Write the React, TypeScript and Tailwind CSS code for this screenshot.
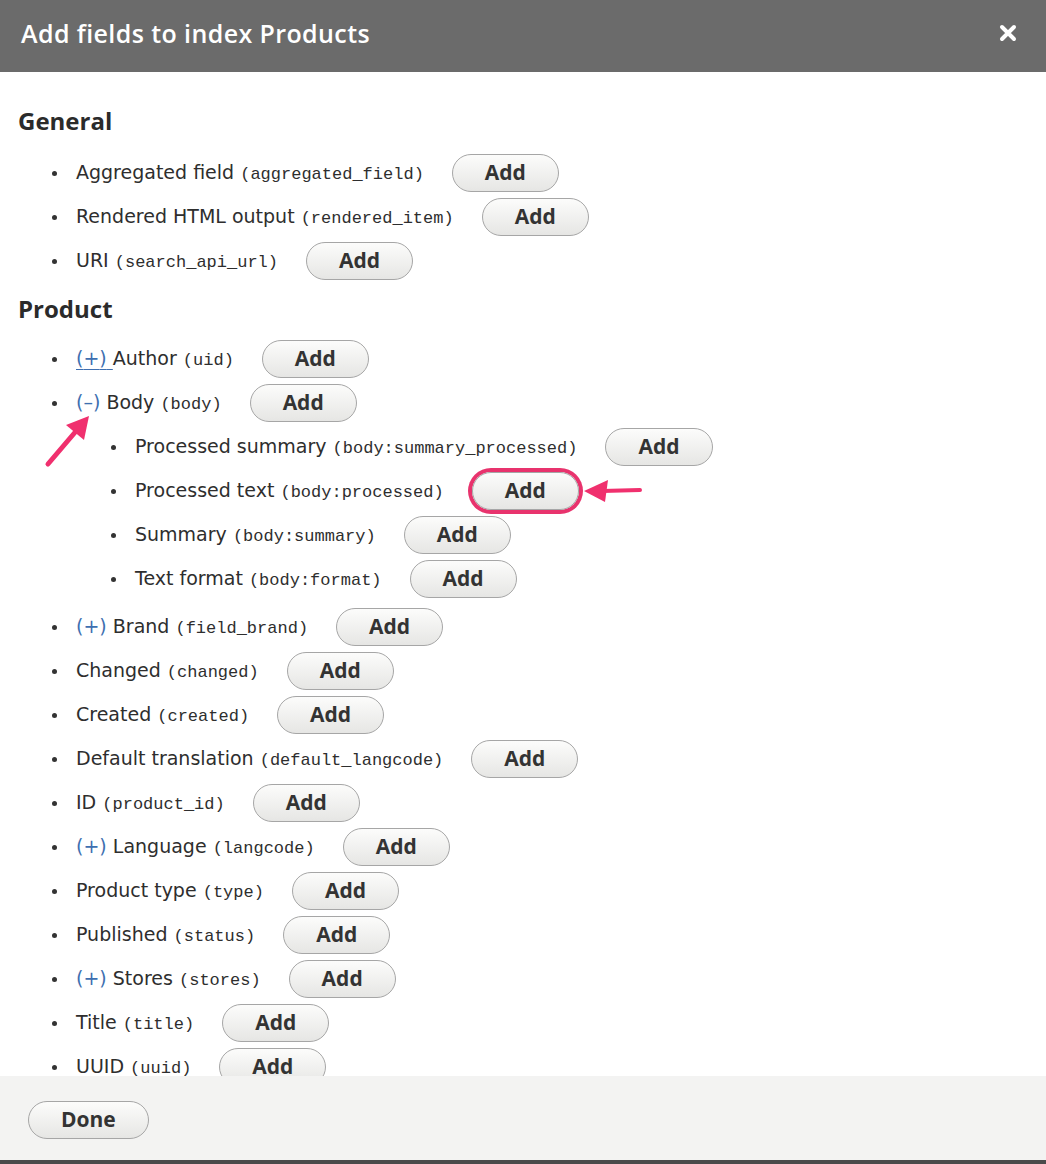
import { ReactNode } from "react";

type Field = {
  label: string;
  name: string;
  toggle?: "+" | "-";
  underline?: boolean;
  highlight?: boolean;
  children?: Field[];
};

const general: Field[] = [
  { label: "Aggregated field", name: "aggregated_field" },
  { label: "Rendered HTML output", name: "rendered_item" },
  { label: "URI", name: "search_api_url" },
];

const product: Field[] = [
  { label: "Author", name: "uid", toggle: "+", underline: true },
  {
    label: "Body",
    name: "body",
    toggle: "-",
    children: [
      { label: "Processed summary", name: "body:summary_processed" },
      { label: "Processed text", name: "body:processed", highlight: true },
      { label: "Summary", name: "body:summary" },
      { label: "Text format", name: "body:format" },
    ],
  },
  { label: "Brand", name: "field_brand", toggle: "+" },
  { label: "Changed", name: "changed" },
  { label: "Created", name: "created" },
  { label: "Default translation", name: "default_langcode" },
  { label: "ID", name: "product_id" },
  { label: "Language", name: "langcode", toggle: "+" },
  { label: "Product type", name: "type" },
  { label: "Published", name: "status" },
  { label: "Stores", name: "stores", toggle: "+" },
  { label: "Title", name: "title" },
  { label: "UUID", name: "uuid" },
];

function Button({ children, highlight }: { children: ReactNode; highlight?: boolean }) {
  return (
    <button
      className={
        "h-[38px] shrink-0 rounded-full border border-[#a6a6a6] bg-linear-to-b from-[#fcfcfb] to-[#e6e6e4] px-[32px] font-['Open_Sans',sans-serif] text-[21px] font-bold text-[#333] " +
        (highlight ? "ring-4 ring-[#e8336d]" : "")
      }
    >
      {children}
    </button>
  );
}

function FieldRow({ field }: { field: Field }) {
  return (
    <li>
      <div className="flex h-[44px] items-center">
        <span className="flex w-[26px] shrink-0 items-center">
          <span className="ml-[2px] h-[5px] w-[5px] rounded-full bg-[#333]" />
        </span>
        <span className="whitespace-nowrap font-['DejaVu_Sans',sans-serif] text-[19px] text-[#2e2e2e]">
          {field.toggle && (
            <span className={"text-[#3e6fb0] " + (field.underline ? "underline underline-offset-4" : "")}>
              ({field.toggle === "+" ? "+" : "\u2013"}){field.underline ? "\u00a0" : ""}
            </span>
          )}
          {field.toggle && !field.underline ? " " : ""}
          {field.label}{" "}
          <span className="font-['Liberation_Mono',monospace] text-[17px]">({field.name})</span>
        </span>
        <span className="ml-[28px]">
          <Button highlight={field.highlight}>Add</Button>
        </span>
      </div>
      {field.children && (
        <ul className="mb-[4px] pl-[59px]">
          {field.children.map((c) => (
            <FieldRow key={c.name} field={c} />
          ))}
        </ul>
      )}
    </li>
  );
}

export default function App() {
  return (
    <div className="flex h-[1164px] w-[1046px] flex-col bg-white font-['Open_Sans',sans-serif]">
      {/* header */}
      <div className="flex h-[72px] shrink-0 items-center justify-between bg-[#6b6b6b] pl-[21px] pr-[29px]">
        <h1 className="mt-[-4px] text-[25px] font-semibold tracking-[0.4px] text-white">Add fields to index Products</h1>
        <svg width="18" height="18" viewBox="0 0 18 18" className="mt-[-6px]">
          <path d="M3 3 L15 15 M15 3 L3 15" stroke="white" strokeWidth="4" strokeLinecap="round" />
        </svg>
      </div>

      {/* body */}
      <div className="relative flex-1 overflow-hidden px-[18px] pt-[33px]">
        <h2 className="mb-[14px] h-[32px] text-[24px] font-bold leading-[32px] text-[#2b2b2b]">General</h2>
        <ul className="pl-[32px]">
          {general.map((f) => (
            <FieldRow key={f.name} field={f} />
          ))}
        </ul>
        <h2 className="mb-[12px] mt-[10px] h-[32px] text-[24px] font-bold leading-[32px] text-[#2b2b2b]">Product</h2>
        <ul className="pl-[32px]">
          {product.map((f) => (
            <FieldRow key={f.name} field={f} />
          ))}
        </ul>

        {/* annotation arrows */}
        <svg width="50" height="56" viewBox="0 0 50 56" className="absolute left-[44px] top-[342px]">
          <path d="M4 50 L33 16" stroke="#f0306e" strokeWidth="5" strokeLinecap="round" />
          <polygon points="45,2 40,26 22,11" fill="#f0306e" />
        </svg>
        <svg width="65" height="26" viewBox="0 0 65 26" className="absolute left-[580px] top-[406px]">
          <path d="M22 13 L60 12" stroke="#f0306e" strokeWidth="4" strokeLinecap="round" />
          <polygon points="4,13 28,2 25,24" fill="#f0306e" />
        </svg>
      </div>

      {/* footer */}
      <div className="h-[84px] shrink-0 bg-[#f3f3f2] px-[28px] pt-[25px]">
        <Button>Done</Button>
      </div>
      <div className="h-[4px] shrink-0 bg-[#4a4a4a]" />
    </div>
  );
}
